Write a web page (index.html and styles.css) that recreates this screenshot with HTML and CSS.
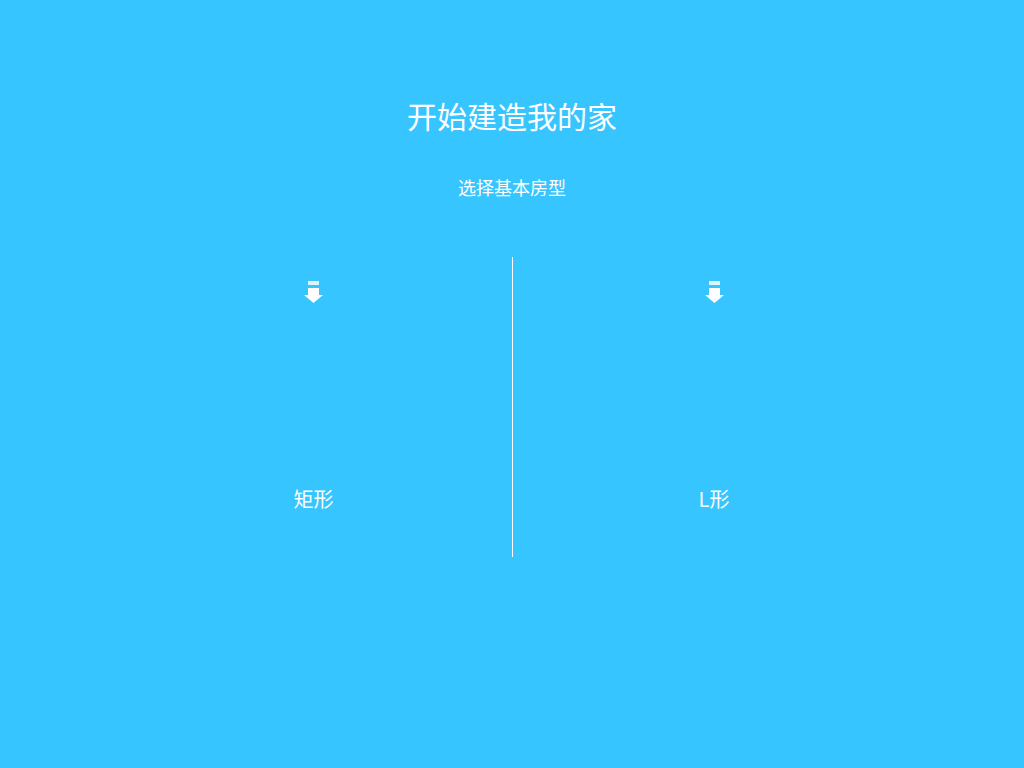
FILE: index.html
```html
<!DOCTYPE html>
<html lang="zh-CN">
<head>
<meta charset="utf-8">
<meta name="viewport" content="width=device-width, initial-scale=1">
<title>开始建造我的家</title>
<link rel="stylesheet" href="styles.css">
</head>
<body>
<main class="page">
  <h1 class="title">开始建造我的家</h1>
  <h2 class="subtitle">选择基本房型</h2>
  <div class="choices">
    <a class="choice" href="#rectangle">
      <svg class="arrow" viewBox="0 0 19 22" aria-hidden="true">
        <path class="arrow-bar" d="M4 0h11v4H4z"/>
        <path d="M4 7h11v7h4L9.500 22 0 14h4z"/>
      </svg>
      <span class="label">矩形</span>
    </a>
    <a class="choice" href="#l-shape">
      <svg class="arrow" viewBox="0 0 19 22" aria-hidden="true">
        <path class="arrow-bar" d="M4 0h11v4H4z"/>
        <path d="M4 7h11v7h4L9.500 22 0 14h4z"/>
      </svg>
      <span class="label">L形</span>
    </a>
  </div>
</main>
</body>
</html>
```

FILE: styles.css
```css
* {
  box-sizing: border-box;
}

body {
  margin: 0;
  min-height: 100vh;
  background: #37c5ff;
  color: #fff;
  font-family: "Noto Sans CJK SC", sans-serif;
  text-align: center;
}

.page {
  padding: 95px 16px 32px;
}

.title {
  margin: 0;
  font-size: 30px;
  font-weight: 400;
  line-height: 40px;
}

.subtitle {
  margin: 40px 0 0;
  font-size: 18px;
  font-weight: 400;
  line-height: 24px;
}

.choices {
  display: grid;
  grid-template-columns: 1fr 1fr;
  max-width: 800px;
  margin: 58px auto 0;
}

.choice {
  display: flex;
  flex-direction: column;
  align-items: center;
  justify-content: space-between;
  min-height: 300px;
  padding: 24px 0 44px 3px;
  color: inherit;
  text-decoration: none;
}

.choice + .choice {
  border-left: 1px solid #fff;
}

.arrow {
  width: 19px;
  height: 22px;
  fill: #fff;
}

.arrow-bar {
  fill: #dbf5ff;
}

.label {
  font-size: 20px;
  font-weight: 400;
  line-height: 28px;
}
```
